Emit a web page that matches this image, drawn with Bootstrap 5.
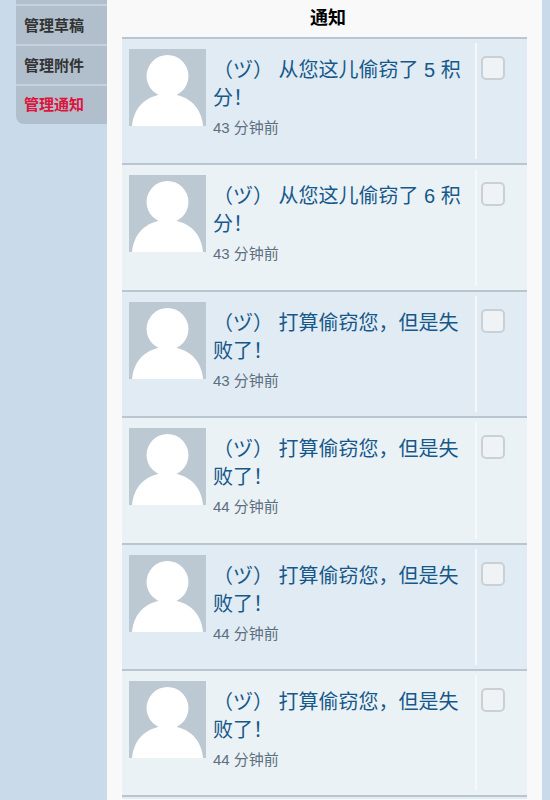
<!DOCTYPE html>
<html lang="zh">
<head>
  <meta charset="UTF-8">
  <title>通知</title>
  <link href="https://cdn.jsdelivr.net/npm/bootstrap@5.3.0/dist/css/bootstrap.min.css" rel="stylesheet">
  <style>
    html, body {
      height: 800px;
      overflow: hidden;
    }

    body {
      background-color: #c9dbeb;
      font-family: "Liberation Sans", "Noto Sans CJK SC", sans-serif;
    }

    .page-wrap {
      padding-left: 16px;
      padding-right: 8px;
    }

    .side-menu {
      width: 91px;
      flex-shrink: 0;
      align-self: flex-start;
      background: #b0bfcb;
      border-bottom-left-radius: 8px;
      overflow: hidden;
    }

    .side-stub {
      height: 6px;
      border-bottom: 2px solid #c5d2dc;
    }

    .side-item {
      height: 40px;
      line-height: 40px;
      padding-left: 8px;
      font-size: 15px;
      font-weight: 700;
      color: #333;
      border-bottom: 2px solid #c5d2dc;
    }

    .side-item:last-child {
      border-bottom: 0;
      height: 38px;
      line-height: 38px;
    }

    .side-item.active-item {
      color: #dc143c;
    }

    .main-panel {
      flex: 1;
      height: 800px;
      background: #f9f9f9;
      padding: 0 15px;
      overflow: hidden;
    }

    .panel-title {
      height: 37px;
      line-height: 36px;
      padding-left: 7px;
      font-size: 18px;
      font-weight: 700;
      color: #000;
      text-align: center;
    }

    .note-row {
      height: 126.4px;
      border-top: 2px solid #b9c6d0;
      background: #ebf2f6;
    }

    .note-row:nth-child(odd) {
      background: #e0ebf3;
    }

    .note-row.row-stub {
      height: 4px;
    }

    .note-body {
      flex: 1;
      padding: 10px 7px;
      gap: 7px;
    }

    .note-pic {
      width: 77px;
      height: 77px;
      flex-shrink: 0;
      background: #bcc8d2;
      display: block;
    }

    .note-text {
      font-size: 20px;
      line-height: 28px;
      color: #17588a;
      margin-top: 7px;
    }

    .note-time {
      font-size: 15px;
      line-height: 20px;
      color: #5c6f80;
      margin-top: 6px;
    }

    .note-check {
      width: 52px;
      flex-shrink: 0;
      padding: 0 0 0 4px;
      margin: 4px 0;
      border-left: 2px solid #f4f8fb;
    }

    .note-check .form-check-input {
      width: 24px;
      height: 24px;
      margin: 13px 0 0;
      background-color: #eff3f6;
      border: 2px solid #c9d0d6;
      border-radius: 5px;
    }
  </style>
</head>
<body>
  <div class="page-wrap d-flex">
    <div class="side-menu">
      <div class="side-stub"></div>
      <div class="side-item">管理草稿</div>
      <div class="side-item">管理附件</div>
      <div class="side-item active-item">管理通知</div>
    </div>

    <div class="main-panel">
      <div class="panel-title">通知</div>
      <div id="noteList"></div>
    </div>
  </div>

  <script src="https://cdn.jsdelivr.net/npm/bootstrap@5.3.0/dist/js/bootstrap.bundle.min.js"></script>
  <script>
    const notes = [
      ["（ヅ） 从您这儿偷窃了 5 积分！", "43 分钟前"],
      ["（ヅ） 从您这儿偷窃了 6 积分！", "43 分钟前"],
      ["（ヅ） 打算偷窃您，但是失败了！", "43 分钟前"],
      ["（ヅ） 打算偷窃您，但是失败了！", "44 分钟前"],
      ["（ヅ） 打算偷窃您，但是失败了！", "44 分钟前"],
      ["（ヅ） 打算偷窃您，但是失败了！", "44 分钟前"]
    ];

    document.getElementById("noteList").innerHTML = notes.map(([text, time]) => `
      <div class="note-row d-flex">
        <div class="note-body d-flex">
          <svg class="note-pic" viewBox="0 0 77 77">
            <circle cx="38.5" cy="27" r="21" fill="#fff"/>
            <path d="M3 77 C5 55 21 45 38.5 45 C56 45 72 55 74 77 Z" fill="#fff"/>
          </svg>
          <div>
            <div class="note-text">${text}</div>
            <div class="note-time">${time}</div>
          </div>
        </div>
        <div class="note-check"><input class="form-check-input" type="checkbox"></div>
      </div>
    `).join("") + `<div class="note-row row-stub"></div>`;
  </script>
</body>
</html>
